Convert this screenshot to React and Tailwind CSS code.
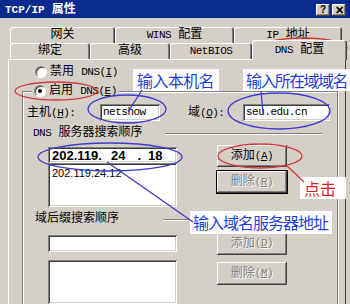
import React from "react";

const bevelOut =
  "shadow-[inset_-1px_-1px_#404040,inset_1px_1px_#ffffff,inset_-2px_-2px_#808080,inset_2px_2px_#d4d0c8]";
const bevelIn =
  "shadow-[inset_1px_1px_#808080,inset_-1px_-1px_#ffffff,inset_2px_2px_#404040,inset_-2px_-2px_#d4d0c8]";
const tabEdge =
  "rounded-t-[3px] shadow-[inset_1px_1px_#ffffff,inset_-1px_0_#404040,inset_-2px_0_#808080]";

const Lat = ({ children }) => (
  <span className="text-[11px] tracking-[-0.5px]">{children}</span>
);

const Tab = ({ className, children }) => (
  <div
    className={`${className} h-[16px] flex items-center justify-center leading-[14px] ${tabEdge}`}
  >
    {children}
  </div>
);

const Radio = ({ checked }) => (
  <span className="w-[12px] h-[12px] rounded-full bg-white border border-t-[#808080] border-l-[#808080] border-b-white border-r-white shadow-[inset_1px_1px_#404040] flex items-center justify-center">
    {checked && <span className="w-[4px] h-[4px] rounded-full bg-black" />}
  </span>
);

const Button = ({ children, disabled, outlined, className = "" }) => (
  <div
    className={`w-[70px] ${className} flex items-center justify-center bg-[#d4d0c8] ${bevelOut} ${
      outlined ? "outline outline-1 outline-black" : ""
    } ${disabled ? "text-[#808080] [text-shadow:1px_1px_#ffffff]" : "text-black"}`}
  >
    {children}
  </div>
);

const Field = ({ className = "", children }) => (
  <div className={`bg-white ${bevelIn} ${className}`}>{children}</div>
);

const Etch = ({ className }) => (
  <div className={`${className} h-[2px] border-t border-t-[#808080] border-b border-b-white`} />
);

export default function App() {
  return (
    <div className="w-[350px] h-[304px] overflow-hidden relative bg-[#d4d0c8] text-black text-[12px] font-['Liberation_Mono','Noto_Sans_CJK_SC',monospace]">
      {/* 标题栏 */}
      <div className="h-[18px] bg-[#0b2a8e] flex items-end justify-between pl-[5px] pr-[4px] pb-[2px]">
        <span className="text-white font-bold leading-[12px]">
          <span className="text-[11px]">TCP/IP</span> 属性
        </span>
        <div className="flex gap-[2px]">
          <div className={`w-[14px] h-[12px] bg-[#d4d0c8] ${bevelOut} flex items-center justify-center text-[10px] font-bold leading-none font-['Liberation_Sans',sans-serif]`}>
            ?
          </div>
          <div className={`w-[14px] h-[12px] bg-[#d4d0c8] ${bevelOut} flex items-center justify-center text-[11px] font-bold leading-none font-['Liberation_Sans',sans-serif]`}>
            ✕
          </div>
        </div>
      </div>

      {/* 标签页 */}
      <div className="pt-[9px]">
        <div className="flex ml-[10px]">
          <Tab className="w-[105px]">网关</Tab>
          <Tab className="w-[119px]">
            <Lat>WINS</Lat>&nbsp;配置
          </Tab>
          <Tab className="w-[108px]">
            <Lat>IP</Lat>&nbsp;地址
          </Tab>
        </div>
        <div className="flex items-end h-[16px] ml-[10px]">
          <Tab className="w-[80px]">绑定</Tab>
          <Tab className="w-[80px]">高级</Tab>
          <Tab className="w-[82px]">
            <Lat>NetBIOS</Lat>
          </Tab>
          <div
            className={`relative z-10 w-[95px] h-[20px] mb-[-1px] bg-[#d4d0c8] flex justify-center pt-[4px] leading-[12px] ${tabEdge}`}
          >
            <span>
              <Lat>DNS</Lat>&nbsp;配置
            </span>
          </div>
        </div>
      </div>

      {/* 面板 */}
      <div className="ml-[8px] w-[338px] h-[245px] border-t border-l border-white border-r border-r-[#404040]">
        <div className="mt-[5px] h-[14px] flex items-center pl-[26px] gap-[3px] leading-[14px]">
          <Radio />
          <span>
            禁用 <Lat>DNS(<u>I</u>)</Lat>
          </span>
        </div>

        <fieldset className="mt-[5px] ml-[13px] w-[316px] h-[230px] border border-[#808080] shadow-[inset_1px_1px_#ffffff,1px_1px_#ffffff]">
          <legend className="ml-[9px] px-[2px] bg-[#d4d0c8]">
            <span className="h-[14px] flex items-center gap-[3px] leading-[14px]">
              <Radio checked />
              <span>
                启用 <Lat>DNS(<u>E</u>)</Lat>
              </span>
            </span>
          </legend>

          <div className="mt-[6px] h-[17px] flex items-center leading-[14px]">
            <span className="w-[77px] pl-[4px]">
              主机<Lat>(<u>H</u>):</Lat>
            </span>
            <Field className="w-[60px] h-[17px] pl-[3px] pt-[2px] leading-[13px]">
              <Lat>netshow</Lat>
            </Field>
            <span className="ml-[28px] w-[55px]">
              域<Lat>(<u>O</u>):</Lat>
            </span>
            <Field className="w-[87px] h-[17px] pl-[3px] pt-[2px] leading-[13px]">
              <Lat>seu.edu.cn</Lat>
            </Field>
          </div>

          <div className="mt-[6px] h-[13px] flex items-center leading-[13px]">
            <span className="w-[142px] pl-[10px]">
              <Lat>DNS</Lat> 服务器搜索顺序
            </span>
            <Etch className="w-[157px]" />
          </div>

          <div className="mt-[5px] flex">
            <div className="ml-[25px] w-[129px] mt-[2px]">
              <Field className="h-[16px] flex items-center pl-[4px] text-[13px] font-bold leading-none font-['Liberation_Sans',sans-serif]">
                <span>202</span>
                <span>.</span>
                <span>119</span>
                <span>.</span>
                <span className="ml-[9px]">24</span>
                <span className="ml-[12px]">.</span>
                <span className="ml-[7px]">18</span>
              </Field>
              <Field className="h-[44px] pl-[4px] pt-[4px] text-[11px] leading-[12px] font-['Liberation_Sans',sans-serif]">
                202.119.24.12
              </Field>
            </div>
            <div className="ml-[40px]">
              <Button className="h-[22px]">
                添加<Lat>(<u>A</u>)</Lat>
              </Button>
              <Button className="h-[22px] mt-[4px]" disabled outlined>
                删除<Lat>(<u>R</u>)</Lat>
              </Button>
            </div>
          </div>

          <div className="mt-[6px] h-[13px] flex items-center leading-[13px]">
            <span className="w-[140px] pl-[12px]">域后缀搜索顺序</span>
            <Etch className="w-[159px]" />
          </div>

          <div className="mt-[6px] flex">
            <div className="ml-[25px] w-[129px] mt-[3px]">
              <Field className="h-[17px]" />
              <Field className="h-[44px] mt-[8px]" />
            </div>
            <div className="ml-[40px]">
              <Button className="h-[23px]" disabled>
                添加<Lat>(<u>D</u>)</Lat>
              </Button>
              <Button className="h-[23px] mt-[7px]" disabled>
                删除<Lat>(<u>M</u>)</Lat>
              </Button>
            </div>
          </div>
        </fieldset>
      </div>

      {/* 标注文字 */}
      <div className="absolute left-[133px] top-[69px] w-[86px] h-[22px] bg-white text-[#1f3fd8] text-[16px] leading-[22px] tracking-[-0.6px] pl-[4px] font-['Noto_Sans_CJK_SC',sans-serif]">
        输入本机名
      </div>
      <div className="absolute left-[243px] top-[69px] w-[107px] h-[22px] bg-white text-[#1f3fd8] text-[16px] leading-[22px] tracking-[-1.6px] pl-[3px] whitespace-nowrap font-['Noto_Sans_CJK_SC',sans-serif]">
        输入所在域域名
      </div>
      <div className="absolute left-[300px] top-[177px] w-[46px] h-[22px] bg-white text-[#e02020] text-[16px] leading-[22px] pl-[4px] font-['Noto_Sans_CJK_SC',sans-serif]">
        点击
      </div>
      <div className="absolute left-[190px] top-[211px] w-[142px] h-[23px] bg-white text-[#1f3fd8] text-[16px] leading-[23px] tracking-[-1px] pl-[3px] whitespace-nowrap font-['Noto_Sans_CJK_SC',sans-serif]">
        输入域名服务器地址
      </div>

      {/* 标注圈和连线 */}
      <svg className="absolute inset-0 pointer-events-none" width="350" height="304" viewBox="0 0 350 304" fill="none">
        <g stroke="#d23a3a" strokeWidth="1.3">
          <ellipse cx="303" cy="48" rx="44" ry="10" />
          <ellipse cx="56" cy="91" rx="41" ry="9" />
          <ellipse cx="260" cy="156" rx="42" ry="12" />
          <line x1="285" y1="164" x2="304" y2="182" />
        </g>
        <g stroke="#3a3acf" strokeWidth="1.3">
          <ellipse cx="127" cy="109" rx="39" ry="14" />
          <ellipse cx="279" cy="111" rx="51" ry="18" />
          <ellipse cx="110" cy="157" rx="72" ry="14" />
          <line x1="142" y1="90" x2="128" y2="112" />
          <line x1="261" y1="91" x2="263" y2="113" />
          <line x1="107" y1="162" x2="193" y2="222" />
        </g>
      </svg>
    </div>
  );
}
